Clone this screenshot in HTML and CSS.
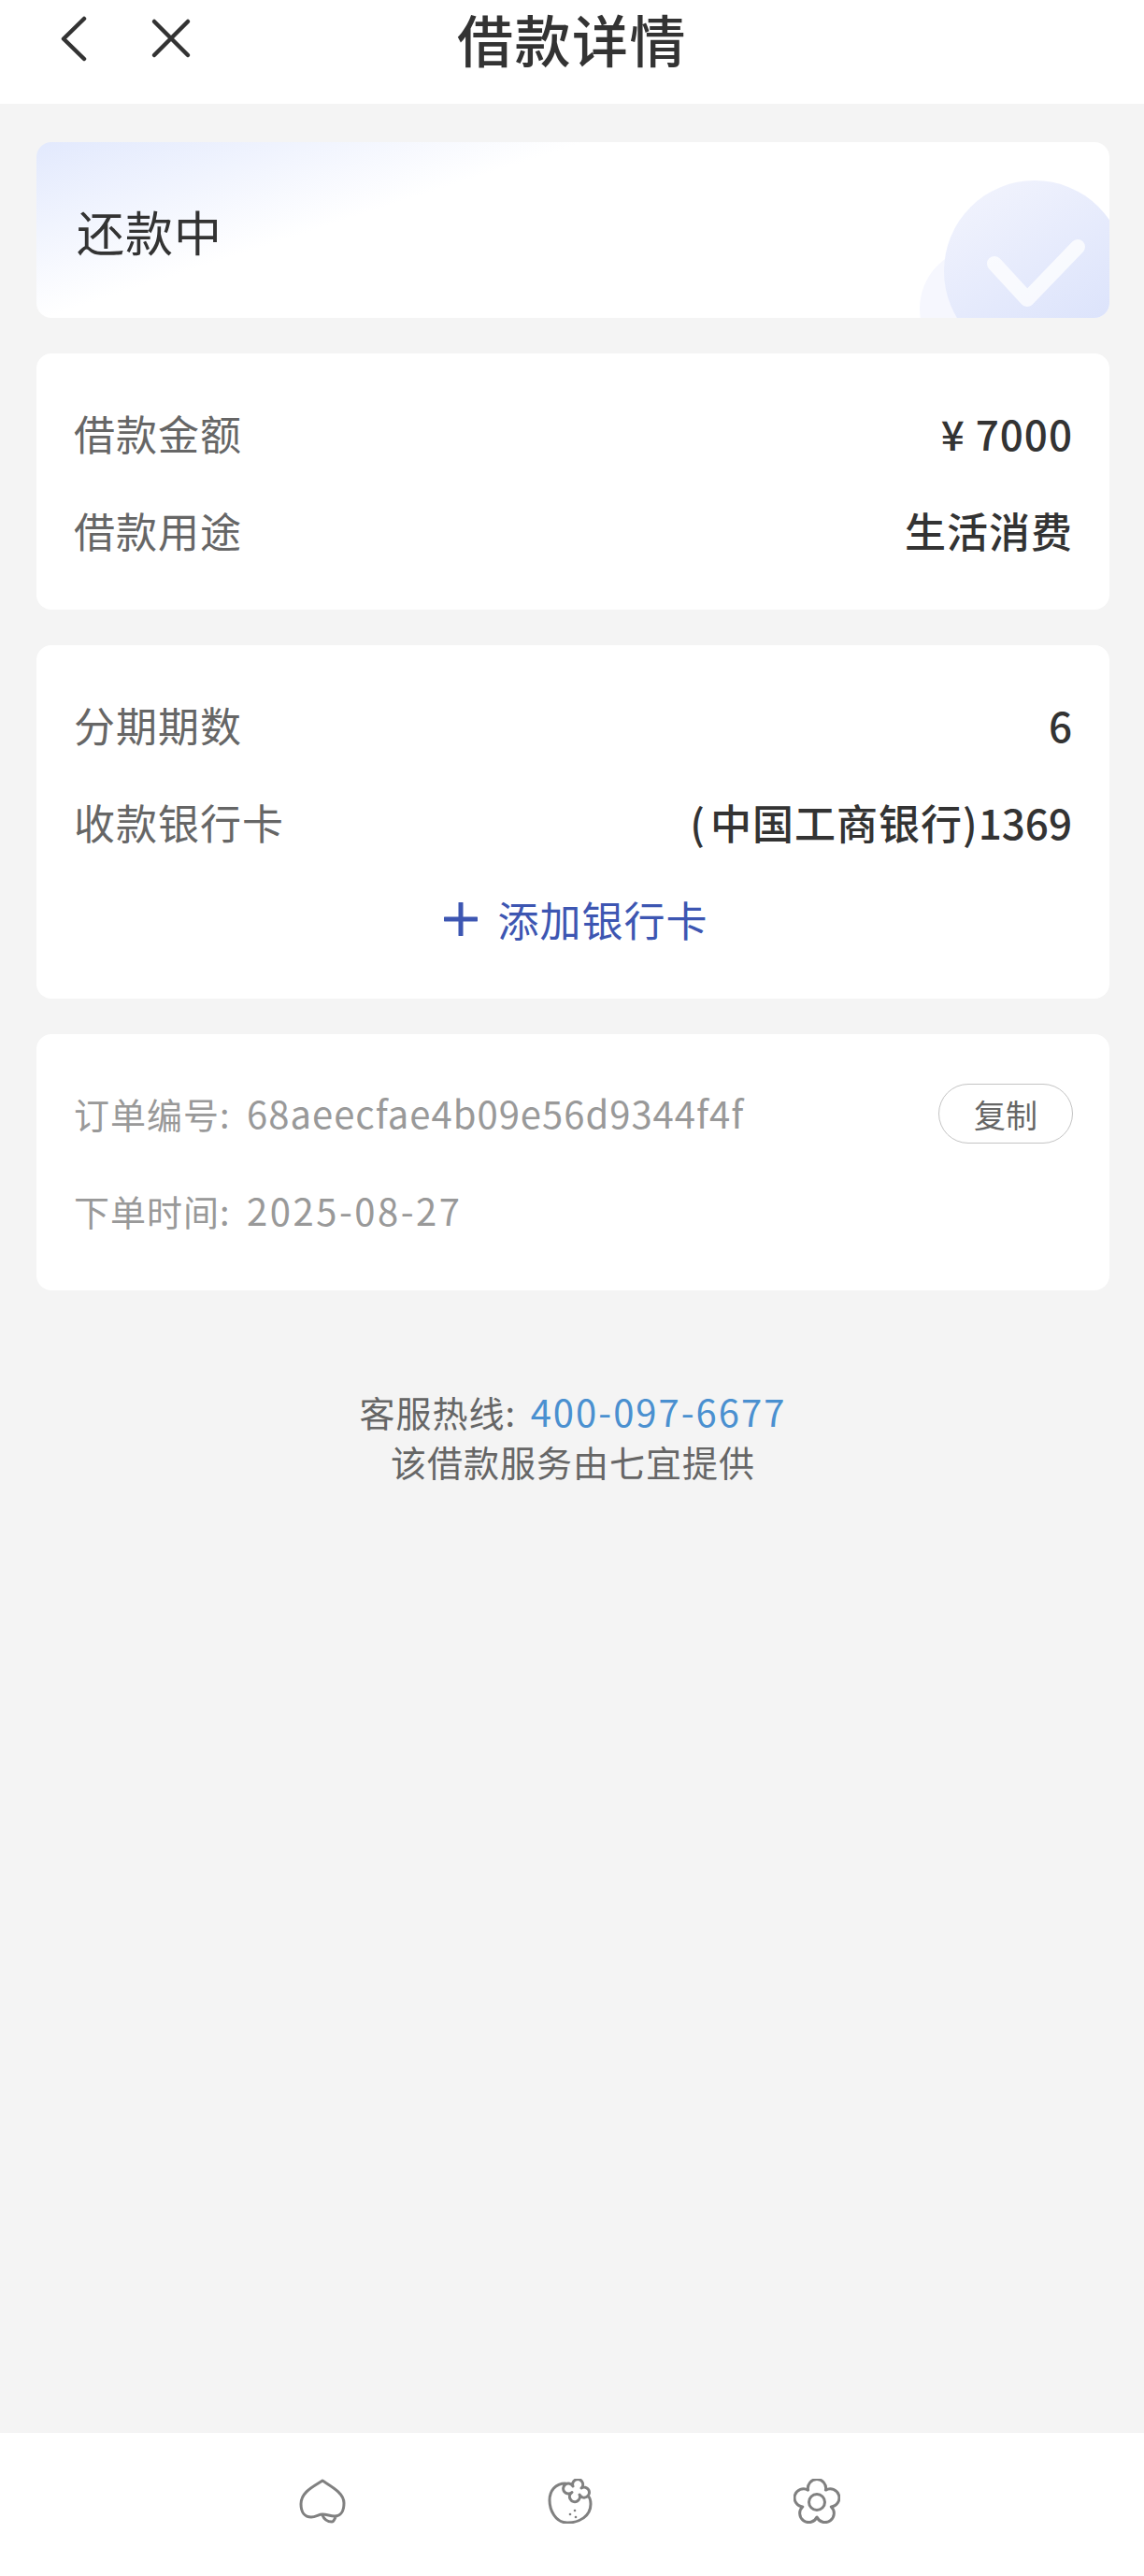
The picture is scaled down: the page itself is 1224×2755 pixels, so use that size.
FILE: index.html
```html
<!DOCTYPE html>
<html lang="zh-CN">
<head>
<meta charset="utf-8">
<title>借款详情</title>
<link rel="stylesheet" href="styles.css">
</head>
<body>
<div class="page">
  <header class="topbar">
    <svg class="back-icon" width="30" height="50" viewBox="0 0 30 50"><path d="M26 3 L4 24.500 L26 46"/></svg>
    <svg class="close-icon" width="44" height="44" viewBox="0 0 44 44"><path d="M4 4 L40 40 M40 4 L4 40"/></svg>
    <h1 class="title">借款详情</h1>
  </header>

  <main class="content">
    <section class="card status-card">
      <div class="status-text">还款中</div>
      <svg class="status-deco" width="210" height="150" viewBox="0 0 210 150">
        <defs>
          <linearGradient id="deco" x1="0.2" y1="0" x2="0.8" y2="1">
            <stop offset="0" stop-color="#f1f3fd"/>
            <stop offset="1" stop-color="#d9e1fb"/>
          </linearGradient>
        </defs>
        <circle cx="72" cy="140" r="65" fill="#f6f7fe"/>
        <circle cx="130" cy="100" r="97" fill="url(#deco)"/>
        <path d="M87 92 L122 130 L176 74" fill="none" stroke="#fff" stroke-opacity="0.75" stroke-width="16" stroke-linecap="round" stroke-linejoin="round"/>
      </svg>
    </section>

    <section class="card">
      <div class="row"><span class="label">借款金额</span><span class="value">¥ 7000</span></div>
      <div class="row"><span class="label">借款用途</span><span class="value">生活消费</span></div>
    </section>

    <section class="card">
      <div class="row"><span class="label">分期期数</span><span class="value">6</span></div>
      <div class="row"><span class="label">收款银行卡</span><span class="value"><span class="paren">(</span>中国工商银行)<span class="tail">1369</span></span></div>
      <div class="row add-row">
        <svg width="36" height="36" viewBox="0 0 36 36"><path d="M18 1 V35 M1 18 H35"/></svg>
        <span>添加银行卡</span>
      </div>
    </section>

    <section class="card">
      <div class="row order-row">
        <span>订单编号: <span class="order-no">68aeecfae4b09e56d9344f4f</span></span>
        <button class="copy-btn" type="button">复制</button>
      </div>
      <div class="row order-row"><span>下单时间: <span class="order-date">2025-08-27</span></span></div>
    </section>

    <div class="service">
      <div>客服热线: <a class="phone">400-097-6677</a></div>
      <div>该借款服务由七宜提供</div>
    </div>
  </main>

  <nav class="bottombar">
    <svg width="50" height="48" viewBox="0 0 50 48"><path d="M25 2 C16 8 2 14 2 27 C2 36 6 41 13 41 C18 41 21 38 25 38 C30 38 33 40 38 40 C45 40 48 34 48 26 C48 15 34 8 25 2 Z M25 39 C27 44 31 46 35 46 C37 46 38 43 39 41"/></svg>
    <svg width="50" height="48" viewBox="-3 0 50 48"><path d="M18 5 C7 5 1 13 1 23 C1 33 7 47 20 47 C33 47 45 40 45 27 C45 23 44 20 42 18 M26 8 A5.500 5.500 0 1 1 35 10 A5.500 5.500 0 1 1 33 17 A5.500 5.500 0 1 1 25 14.500 A5.500 5.500 0 1 1 26 8 Z"/><circle class="dot" cx="28" cy="34" r="1.300"/><circle class="dot" cx="23" cy="38" r="1.300"/><circle class="dot" cx="29" cy="41" r="1.300"/></svg>
    <svg width="50" height="48" viewBox="0 0 50 48"><path d="M15.600 12.100 A9.600 9.600 0 1 1 34.400 12.100 A9.600 9.600 0 1 1 40.200 29.900 A9.600 9.600 0 1 1 25 41 A9.600 9.600 0 1 1 9.800 29.900 A9.600 9.600 0 1 1 15.600 12.100 Z"/><circle cx="25" cy="25" r="8.500"/></svg>
  </nav>
</div>
</body>
</html>
```

FILE: styles.css
```css
* {box-sizing: border-box;}
body {margin: 0; background: #f4f4f4; font-family: "Noto Sans CJK SC", "Noto Sans", sans-serif; color: #333;}
.page {height: 2755px; display: flex; flex-direction: column;}

.topbar {height: 111px; background: #fff; position: relative; display: flex; align-items: flex-start; padding: 17px 0 0 64px; gap: 61px; flex: none;}
.close-icon {margin-top: 2px; margin-left: 6px;}
.back-icon path, .close-icon path {fill: none; stroke: #333; stroke-width: 4.500; stroke-linecap: round; stroke-linejoin: round;}
.title {position: absolute; left: 0; right: 0; top: 0; margin: 0; height: 82px; line-height: 82px; text-align: center; font-size: 60px; letter-spacing: 1.500px; font-weight: 500; color: #333;}

.content {flex: 1; padding: 41px 37px 0 39px; display: flex; flex-direction: column; gap: 38px;}
.card {background: #fff; border-radius: 16px; padding: 33px 39px 33px 40px;}

.status-card {height: 188px; padding: 2px 0 0 43px; display: flex; align-items: center; position: relative; overflow: hidden; background: linear-gradient(162deg, #e2e9fd 0, #fff 34%);}
.status-text {font-size: 51px; letter-spacing: 1px; color: #333;}
.status-deco {position: absolute; right: 0; bottom: 0;}

.row {height: 104px; display: flex; align-items: center; justify-content: space-between;}
.label {font-size: 44px; letter-spacing: 1px; color: #666;}
.value {font-size: 44px; letter-spacing: 1px; font-weight: 500; color: #333;}
.paren {margin-right: 5px;}
.tail {letter-spacing: 0; margin-right: 1px;}

.add-row {justify-content: center; gap: 22px; font-size: 44px; letter-spacing: 1px; color: #3d56b2;}
.add-row path {fill: none; stroke: #3d56b2; stroke-width: 5; stroke-linecap: round;}
.add-row svg {margin-left: 5px;}

.order-row {font-size: 38px; color: #999; letter-spacing: 1px; padding-bottom: 2px;}
.order-no {font-size: 40px; margin-left: 8px;}
.order-date {font-size: 40px; letter-spacing: 2.500px; margin-left: 8px;}
.copy-btn {width: 144px; height: 64px; margin-top: 2px; border: 1px solid #c4c4c4; border-radius: 32px; background: #fff; font-family: inherit; font-size: 34px; color: #666; padding: 0;}

.service {margin-top: 65px; text-align: center; font-size: 38px; line-height: 53px; color: #666; letter-spacing: 1px;}
.phone {color: #4a90d0; font-size: 40px; letter-spacing: 2px; margin-left: 6px;}

.bottombar {height: 153px; background: #fff; display: flex; gap: 214px; padding: 49px 0 0 320px; flex: none;}
.bottombar svg:last-child {margin-left: 1px;}
.bottombar path, .bottombar circle {fill: #fff; stroke: #808080; stroke-width: 3; stroke-linejoin: round; stroke-linecap: round;}
.bottombar .dot {fill: #808080; stroke: none;}
```
